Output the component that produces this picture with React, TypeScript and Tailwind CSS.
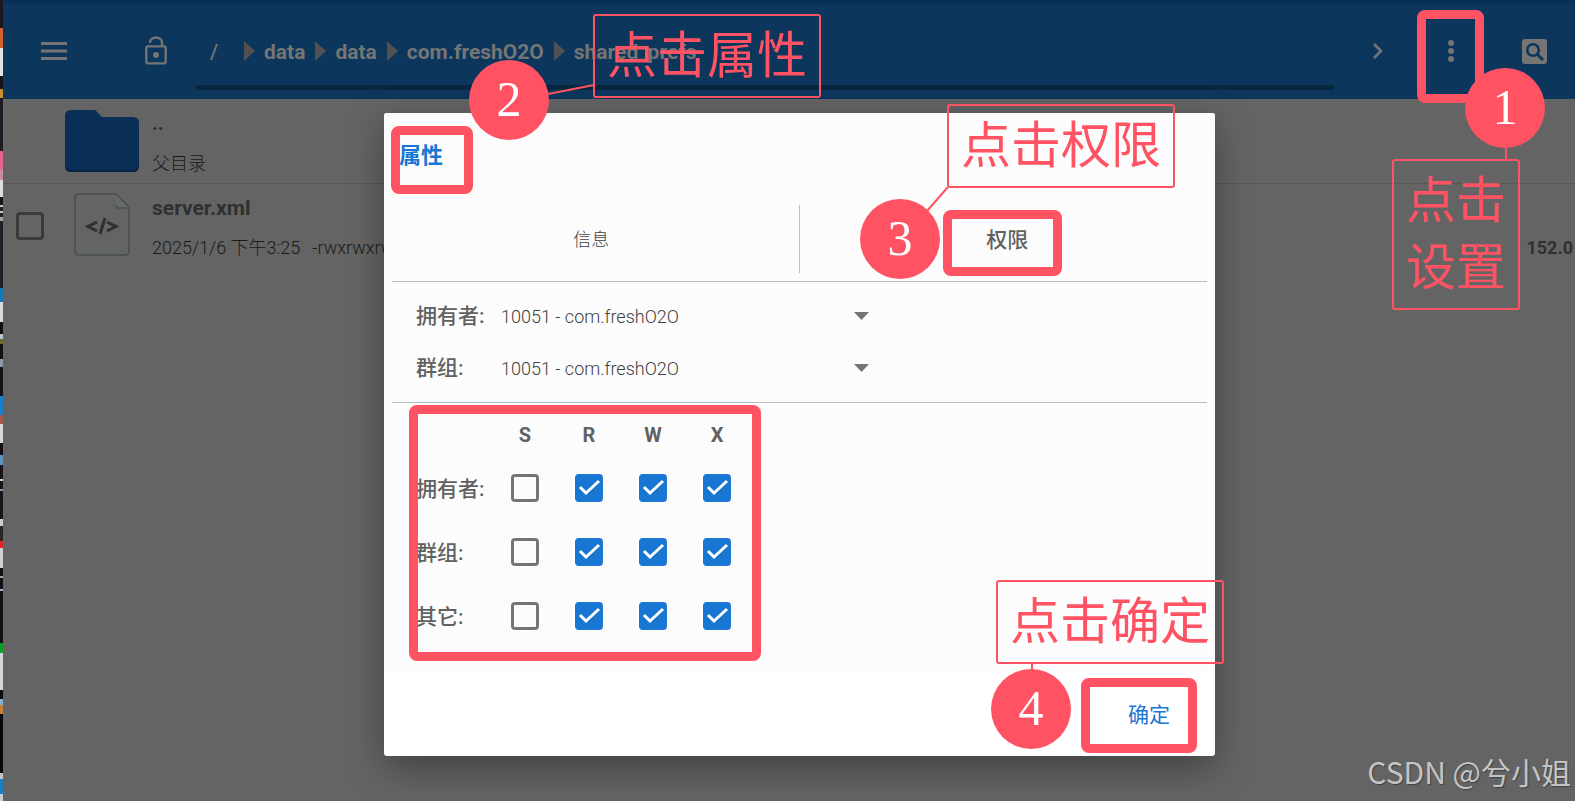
import { Fragment } from "react";

const columns = ["S", "R", "W", "X"];
const rows = ["拥有者:", "群组:", "其它:"];
const crumbs = ["data", "data", "com.freshO2O", "shared_prefs"];

// slice of the desktop behind the emulator window: [height, color]
const desktop: [number, string][] = [
  [28, "#1d1720"], [20, "#d4602c"], [28, "#e2e2e0"], [13, "#17131b"], [9, "#c98a2e"],
  [53, "#1f1924"], [18, "#e8608f"], [11, "#c98aa0"], [17, "#dcdde0"], [8, "#17131b"],
  [2, "#c8c4bc"], [4, "#23202a"], [2, "#c8c4bc"], [4, "#23202a"], [4, "#a9a59c"],
  [67, "#231d28"], [14, "#1478b4"], [20, "#d9dadd"], [12, "#111114"], [5, "#b9c4cf"],
  [5, "#6d6a30"], [15, "#111114"], [8, "#8f9aa8"], [29, "#141318"], [19, "#1a7fc6"],
  [9, "#a8584a"], [20, "#d6d7da"], [12, "#111114"], [10, "#5d94c4"], [14, "#15151a"],
  [2, "#c9ccd0"], [8, "#15151a"], [2, "#8d96a8"], [28, "#15151a"], [7, "#cfcfcc"],
  [15, "#2c2622"], [7, "#d8262b"], [20, "#cfd0d4"], [8, "#111114"], [2, "#a5a08f"],
  [11, "#111114"], [2, "#9fb4cc"], [52, "#111114"], [10, "#109a28"], [37, "#d4d5d8"],
  [9, "#0c0c0e"], [6, "#7cb0d8"], [9, "#c77d36"], [59, "#08080a"], [6, "#c4c2c0"],
  [15, "#1c7fc4"], [7, "#c9ccd2"],
];

function DesktopEdge() {
  return (
    <div className="flex w-[3px] shrink-0 flex-col">
      {desktop.map(([size, color], i) => (
        <div key={i} className="basis-0" style={{ flexGrow: size, background: color }} />
      ))}
    </div>
  );
}

function Header() {
  return (
    <header className="border-t-[3px] border-[#0a2f57] bg-[#0c365c] text-[#757575]">
      <div className="flex h-24 items-center">
        <button aria-label="菜单" className="pl-[38px]">
          <svg width="26" height="18" viewBox="0 0 26 18" fill="currentColor">
            <path d="M0 0h26v3H0zM0 7.5h26v3H0zM0 15h26v3H0z" />
          </svg>
        </button>
        <button aria-label="解锁" className="pl-[77px]">
          <svg width="24" height="30" viewBox="0 0 24 30" fill="none" stroke="currentColor" strokeWidth="2.3">
            <rect x="2.3" y="10.3" width="19.4" height="17" rx="1.5" />
            <path d="M6 7V6.500a6 5 0 0 1 12 0V10" />
            <circle cx="12" cy="19" r="3" fill="currentColor" stroke="none" />
          </svg>
        </button>
        <nav className="ml-[28px] flex h-[87px] min-w-0 flex-1 items-center self-start border-b-[5px] border-[#0a2740] pt-[18px] text-[21px] font-bold">
          <a href="#root" className="w-12 pl-[14px] font-medium">/</a>
          {crumbs.map((name, i) => (
            <Fragment key={i}>
              <svg className="mb-1 shrink-0" width="11" height="20" viewBox="0 0 11 20" fill="#515151">
                <path d="M0 0l11 10L0 20z" />
              </svg>
              <a href="#path" className="pl-[9px] pr-[10px]">{name}</a>
            </Fragment>
          ))}
        </nav>
        <button aria-label="前进" className="pl-[39px]">
          <svg width="10" height="16" viewBox="0 0 10 16" fill="none" stroke="currentColor" strokeWidth="2.6">
            <path d="M1 1l7 7-7 7" />
          </svg>
        </button>
        <button aria-label="设置" className="pl-[65px]">
          <svg width="6" height="22" viewBox="0 0 6 22" fill="currentColor">
            <circle cx="3" cy="3" r="2.9" />
            <circle cx="3" cy="11" r="2.9" />
            <circle cx="3" cy="19" r="2.9" />
          </svg>
        </button>
        <button aria-label="搜索" className="pl-[68px] pr-[28px]">
          <svg width="25" height="25" viewBox="0 0 25 25">
            <rect width="25" height="25" rx="3" fill="#757575" />
            <circle cx="11" cy="11" r="5.8" fill="none" stroke="#0c365c" strokeWidth="2.6" />
            <path d="M15 15l6 6" stroke="#0c365c" strokeWidth="3" />
          </svg>
        </button>
      </div>
    </header>
  );
}

function FileList() {
  return (
    <ul className="text-[#303030]">
      <li className="flex h-[85px] items-center border-b border-[#575757] pl-[61px]">
        <svg className="shrink-0" width="76" height="62" viewBox="0 0 76 62">
          <path d="M7 1h25l6 7h31q6 0 6 6v42q0 6-6 6H7q-6 0-6-6V7q0-6 6-6z" fill="#082442" />
          <path d="M7 0h24l7 7h31q6 0 6 6v41q0 6-6 6H7q-6 0-6-6V6q0-6 6-6z" fill="#0a2f57" />
        </svg>
        <div className="pt-[7px] pl-3">
          <p className="text-[20px] leading-8 font-bold">..</p>
          <p className="mt-[7px] text-[18px] leading-9 font-light text-[#1a1a1a]">父目录</p>
        </div>
      </li>
      <li className="flex h-[84px] items-center pl-[13px]">
        <input
          type="checkbox"
          aria-label="server.xml"
          className="size-7 shrink-0 appearance-none rounded-[4px] border-[3px] border-[#3a3a3a]"
        />
        <svg className="mb-1 ml-[30px] shrink-0" width="57" height="63" viewBox="0 0 57 63">
          <path d="M4 1h38l13 13v44q0 4-4 4H4q-3 0-3-4V4q0-3 3-3z" fill="#626465" stroke="#4a4d4e" strokeWidth="1.5" />
          <path d="M42 2v10q0 3 3 3h9z" fill="#686b6c" />
          <path d="M42 12q0 3 3 3h8" fill="none" stroke="#4f5253" strokeWidth="2" />
          <path d="M23 29l-9 4.500 9 4.500M33 29l9 4.500-9 4.500M31 25l-5 16" fill="none" stroke="#303030" strokeWidth="3" />
        </svg>
        <div className="min-w-0 flex-1 pt-1 pl-[21px]">
          <p className="text-[21px] leading-10 font-bold">server.xml</p>
          <div className="flex gap-3 text-[18px] leading-10 whitespace-nowrap">
            <span className="font-light text-[#1a1a1a]">2025/1/6 下午3:25</span>
            <span className="flex-1 font-light text-[#1a1a1a]">-rwxrwxrwx</span>
            <span className="pr-[2px] font-bold">152.0</span>
          </div>
        </div>
      </li>
    </ul>
  );
}

function OwnerSelect({ id, label }: { id: string; label: string }) {
  return (
    <div className="flex h-[52px] items-center">
      <label htmlFor={id} className="w-[85px] pt-[2px] text-[21px] font-medium">{label}</label>
      <div className="grid w-[372px] items-center">
        <select id={id} className="col-start-1 row-start-1 appearance-none text-[18px] font-light text-[#404040]">
          <option>10051 - com.freshO2O</option>
        </select>
        <svg className="pointer-events-none col-start-1 row-start-1 mr-1 justify-self-end" width="15" height="8" viewBox="0 0 15 8" fill="#757575">
          <path d="M0 0h15L7.500 8z" />
        </svg>
      </div>
    </div>
  );
}

function PermissionBox({ label, checked }: { label: string; checked: boolean }) {
  return (
    <span className="inline-grid align-middle">
      <input
        type="checkbox"
        aria-label={label}
        defaultChecked={checked}
        className="peer col-start-1 row-start-1 size-7 appearance-none rounded-[4px] border-[3px] border-[#757575] checked:border-[#1976d2] checked:bg-[#1976d2]"
      />
      <svg className="pointer-events-none invisible col-start-1 row-start-1 peer-checked:visible" width="28" height="28" viewBox="0 0 28 28" fill="none" stroke="#fff" strokeWidth="3">
        <path d="M5 13l6 6L24 7" />
      </svg>
    </span>
  );
}

function PropertiesDialog() {
  return (
    <div className="absolute inset-0 flex items-start justify-center pt-[113px] pl-6">
      <section
        role="dialog"
        aria-label="属性"
        className="w-[831px] overflow-hidden rounded-[3px] bg-white text-[#616161] shadow-[0_12px_36px_rgba(0,0,0,0.35)]"
      >
        <div className="bg-[#fcfcfc] px-2 pb-[24px]">
          <h2 className="px-[7px] pt-[25px] text-[22px] leading-9 font-bold text-[#1976d2]">属性</h2>
          <div role="tablist" className="mt-[31px] grid grid-cols-2 border-b border-[#bdbdbd] pb-2">
            <button role="tab" className="h-[68px] border-r border-[#bdbdbd] pr-2 text-[18px] font-light text-[#404040]">信息</button>
            <button role="tab" aria-selected="true" className="h-[68px] pt-1 pl-2 text-[21px] font-medium">权限</button>
          </div>
          <div className="border-b border-[#bdbdbd] px-6 py-2">
            <OwnerSelect id="owner" label="拥有者:" />
            <OwnerSelect id="group" label="群组:" />
          </div>
          <table className="ml-6 table-fixed text-center">
            <thead>
              <tr className="h-[53px] text-[20px]">
                <td className="w-[77px]" />
                {columns.map((c) => (
                  <th key={c} className="w-16 pt-[10px] font-bold">{c}</th>
                ))}
              </tr>
            </thead>
            <tbody>
              {rows.map((row) => (
                <tr key={row} className="h-16">
                  <th className="pt-[3px] text-left text-[21px] font-medium whitespace-nowrap">{row}</th>
                  {columns.map((c) => (
                    <td key={c}>
                      <PermissionBox label={`${row} ${c}`} checked={c !== "S"} />
                    </td>
                  ))}
                </tr>
              ))}
            </tbody>
          </table>
        </div>
        <div className="flex h-[84px] items-center justify-end pt-1 pr-[45px]">
          <button className="text-[21px] text-[#1976d2]">确定</button>
        </div>
      </section>
    </div>
  );
}

function Frame({ className }: { className: string }) {
  return <div className={`absolute rounded-lg border-[9px] border-[#ff5364] ${className}`} />;
}

function Step({ n, className }: { n: number; className: string }) {
  return (
    <div className={`absolute flex size-20 items-center justify-center rounded-full bg-[#ff5364] pb-[3px] font-['Liberation_Serif',serif] text-[50px] leading-none text-white ${className}`}>
      {n}
    </div>
  );
}

function Note({ text, className }: { text: string; className: string }) {
  return (
    <p className={`absolute rounded-[3px] border-2 border-[#ff5364] px-3 pt-[7px] pb-[6px] text-[50px] leading-[67px] text-[#ff5364] ${className}`}>
      {text}
    </p>
  );
}

function Annotations() {
  return (
    <div className="pointer-events-none absolute inset-0">
      <svg className="absolute inset-0 size-full" stroke="#ff5364" strokeWidth="2">
        <path d="M1506 148v12M548 94l46-9M927 211l21-24M1032 663v8" />
      </svg>
      <Frame className="top-[10px] left-[1417px] h-[93px] w-[67px]" />
      <Frame className="top-[126px] left-[391px] h-[68px] w-[82px]" />
      <Frame className="top-[210px] left-[943px] h-[66px] w-[119px]" />
      <Frame className="top-[405px] left-[409px] h-[256px] w-[352px]" />
      <Frame className="top-[678px] left-[1081px] h-[75px] w-[116px]" />
      <Note text="点击设置" className="top-[159px] left-[1392px] w-32" />
      <Note text="点击属性" className="top-[14px] left-[593px]" />
      <Note text="点击权限" className="top-[104px] left-[947px]" />
      <Note text="点击确定" className="top-[580px] left-[996px]" />
      <Step n={1} className="top-[68px] left-[1465px]" />
      <Step n={2} className="top-[60px] left-[469px]" />
      <Step n={3} className="top-[199px] left-[860px]" />
      <Step n={4} className="top-[669px] left-[991px]" />
    </div>
  );
}

export default function App() {
  return (
    <div className="relative flex h-screen overflow-hidden bg-[#646464] font-[Roboto,'Noto_Sans_CJK_SC',sans-serif]">
      <DesktopEdge />
      <main className="min-w-0 flex-1">
        <Header />
        <FileList />
      </main>
      <PropertiesDialog />
      <Annotations />
      <p className="absolute right-1 bottom-[6px] font-['Noto_Sans_CJK_SC',sans-serif] text-[30px] leading-[48px] text-[#c4c4c4] [text-shadow:1px_1px_1px_#404040]">
        CSDN @兮小姐
      </p>
    </div>
  );
}
